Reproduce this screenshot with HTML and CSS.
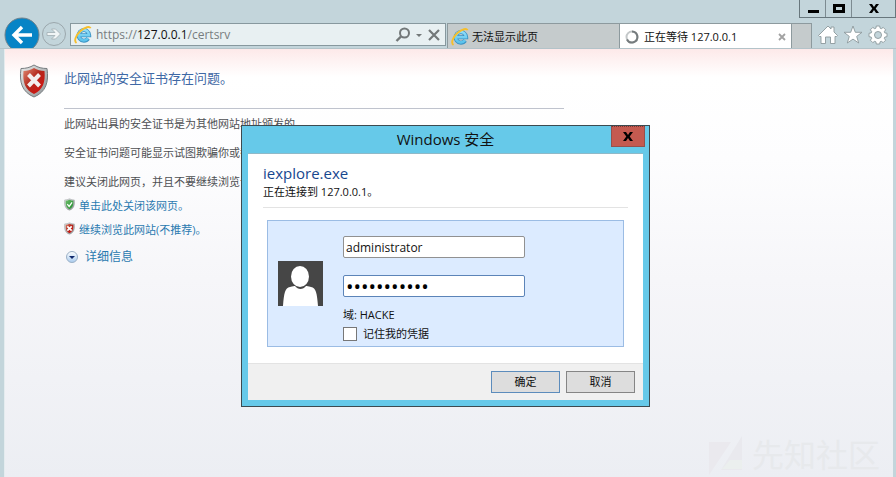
FILE: index.html
```html
<!DOCTYPE html>
<html lang="zh-CN">
<head>
<meta charset="utf-8">
<title>正在等待 127.0.0.1</title>
<link rel="stylesheet" href="styles.css">
</head>
<body>
<svg class="defs" aria-hidden="true">
  <defs>
    <linearGradient id="ie-blue" x1="0" y1="0" x2="0" y2="1"><stop offset="0" stop-color="#8fdcf8"/><stop offset="1" stop-color="#5bc3ec"/></linearGradient>
    <linearGradient id="steel" x1="0" y1="0" x2="1" y2="1"><stop offset="0" stop-color="#e8eaea"/><stop offset="1" stop-color="#8c9294"/></linearGradient>
    <linearGradient id="red" x1="0" y1="0" x2="1" y2="1"><stop offset="0" stop-color="#e08a72"/><stop offset=".45" stop-color="#b3281d"/><stop offset="1" stop-color="#d90d0d"/></linearGradient>
    <linearGradient id="green" x1="0" y1="0" x2="1" y2="1"><stop offset="0" stop-color="#6fbf6c"/><stop offset="1" stop-color="#1e8a2b"/></linearGradient>
    <linearGradient id="orb" x1="0" y1="0" x2="0" y2="1"><stop offset="0" stop-color="#fff"/><stop offset="1" stop-color="#a9cbee"/></linearGradient>
    <symbol id="ie" viewBox="0 0 18 18">
      <path d="M14.200 12.500a5.300 5.300 0 1 1 1-3.200H5.500" fill="none" stroke="#3b93c4" stroke-width="4"/>
      <path d="M14 12.300a5.200 5.200 0 1 1 1-3H5.500" fill="none" stroke="url(#ie-blue)" stroke-width="2.600"/>
      <path d="M2.500 17C-.5 15 2 9 6.500 5S16 0 16.500 2.200" fill="none" stroke="#f6bf2c" stroke-width="1.900"/>
    </symbol>
    <symbol id="shield" viewBox="0 0 30 34">
      <path d="M15 1c4 2.500 8 3.500 13 3.500C30 18 27 28 15 33 3 28 0 18 2 4.500 7 4.500 11 3.500 15 1z" fill="url(#steel)" stroke="#777d80"/>
    </symbol>
  </defs>
</svg>

<header class="chrome">
  <div class="window-controls">
    <button type="button" aria-label="最小化"><svg width="12" height="10" viewBox="0 0 12 10"><path d="M1 7.500h11" stroke="#000" stroke-width="3"/></svg></button>
    <button type="button" aria-label="最大化"><svg width="12" height="10" viewBox="0 0 12 10"><path d="M1.500 1.500h9v6h-9z" fill="none" stroke="#000" stroke-width="3"/></svg></button>
    <button type="button" class="wide" aria-label="关闭"><svg width="10" height="10" viewBox="0 0 10 10"><path d="M0 0h3L5 3 7 0h3L6.700 4.500 10 9H7L5 6 3 9H0l3.300-4.500z"/></svg></button>
  </div>
  <nav class="toolbar">
    <button type="button" class="back" aria-label="后退"><svg width="36" height="36" viewBox="0 0 36 36"><circle cx="18" cy="18" r="17" fill="#0784c6" stroke="#70828c"/><path d="M28 18H11M18 10l-8 8 8 8" fill="none" stroke="#fff" stroke-width="3.400"/></svg></button>
    <button type="button" class="forward" aria-label="前进"><svg width="26" height="26" viewBox="0 0 26 26"><circle cx="13" cy="13" r="11.500" fill="none" stroke="#9ba7ac"/><path d="M6 11.500h8L10.500 8h4l5 5-5 5h-4l3.500-3.500H6z" fill="#f0f5f6" stroke="#a1adb2" stroke-width=".8"/></svg></button>
    <div class="address">
      <svg width="18" height="18"><use href="#ie"/></svg>
      <a href="#" class="url">https://<b>127.0.0.1</b>/certsrv</a>
      <button type="button" aria-label="搜索"><svg width="16" height="16" viewBox="0 0 16 16"><circle cx="9.500" cy="6" r="4.500" fill="none" stroke="#737879" stroke-width="2"/><path d="M6 9.500L1.500 14" stroke="#737879" stroke-width="2.400"/></svg></button>
      <button type="button" aria-label="下拉"><svg width="12" height="16" viewBox="0 0 12 16"><path d="M3 7h6L6 10z" fill="#737879"/></svg></button>
      <button type="button" aria-label="停止"><svg width="14" height="16" viewBox="0 0 14 16"><path d="M2 3l10 10M12 3L2 13" stroke="#737879" stroke-width="2.200"/></svg></button>
    </div>
    <a href="#" class="tab"><svg width="18" height="18"><use href="#ie"/></svg><span>无法显示此页</span></a>
    <div class="tab active">
      <svg width="18" height="18" viewBox="0 0 18 18"><circle cx="9" cy="9" r="5.500" fill="none" stroke="#c4c8c9" stroke-width="2"/><path d="M9 3.500A5.500 5.500 0 1 1 4 11.500" fill="none" stroke="#757b7d" stroke-width="2"/></svg>
      <span>正在等待 127.0.0.1</span>
      <button type="button" aria-label="关闭选项卡"><svg width="8" height="8" viewBox="0 0 8 8"><path d="M1 1l6 6M7 1L1 7" stroke="#a2a2a2" stroke-width="1.800"/></svg></button>
    </div>
    <button type="button" class="new-tab" aria-label="新建选项卡"></button>
    <div class="tools">
      <button type="button" aria-label="主页"><svg width="20" height="20" viewBox="0 0 20 20"><path d="M10 1l3 3V2h3v5l3.500 3.500-1 1H17V18.500h-4.500V12h-5v6.500H3v-7H1.500l-1-1z" fill="#fff" stroke="#8c989c" stroke-width=".9"/></svg></button>
      <button type="button" aria-label="收藏夹"><svg width="20" height="20" viewBox="0 0 20 20"><path d="M10 1l2.300 6.300h6.700l-5.300 4.100 2 6.600L10 14.100 4.300 18l2-6.600L1 7.300h6.700z" fill="#fff" stroke="#8c989c" stroke-width=".9"/></svg></button>
      <button type="button" aria-label="工具"><svg width="20" height="20" viewBox="0 0 20 20"><g fill="#fff" stroke="#8c989c" stroke-width=".9"><path d="M8.300 1h3.400l.4 2.200 1.200.5 1.900-1.300 2.400 2.400-1.300 1.900.5 1.200 2.200.4v3.400l-2.200.4-.5 1.200 1.300 1.900-2.400 2.400-1.900-1.300-1.200.5-.4 2.200H8.300l-.4-2.200-1.200-.5-1.900 1.300-2.400-2.400 1.300-1.900-.5-1.200L1 11.700V8.300l2.200-.4.5-1.200-1.300-1.900 2.400-2.400 1.900 1.300 1.200-.5z"/><circle cx="10" cy="10" r="3.500" fill="#c3d5db"/></g></svg></button>
    </div>
  </nav>
</header>

<main class="page">
  <svg class="big-shield" width="30" height="34" viewBox="0 0 30 34"><use href="#shield"/><path d="M15 4c3 2 7 3 10.500 3C26.500 18 24 26 15 30 6 26 3.500 18 4.500 7 8 7 12 6 15 4z" fill="url(#red)"/><path d="M9.500 10.500l11 11.500M20.500 10.500L9.500 22" stroke="#f3eeee" stroke-width="4"/></svg>
  <div class="article">
    <h1>此网站的安全证书存在问题。</h1>
    <p>此网站出具的安全证书是为其他网站地址颁发的</p>
    <p>安全证书问题可能显示试图欺骗你或截</p>
    <p>建议关闭此网页，并且不要继续浏览该</p>
    <a href="#" class="choice"><svg width="11" height="13" viewBox="0 0 30 34"><use href="#shield"/><path d="M15 4c3 2 7 3 10.500 3C26 18 24 26 15 30 6 26 4 18 4.500 7 8 7 12 6 15 4z" fill="url(#green)"/><path d="M9 16l5 6 8-11" fill="none" stroke="#fff" stroke-width="3.500"/></svg>单击此处关闭该网页。</a>
    <a href="#" class="choice"><svg width="11" height="13" viewBox="0 0 30 34"><use href="#shield"/><path d="M15 4c3 2 7 3 10.500 3C26 18 24 26 15 30 6 26 4 18 4.500 7 8 7 12 6 15 4z" fill="url(#red)"/><path d="M9 11l12 12M21 11L9 23" stroke="#fff" stroke-width="4.500"/></svg>继续浏览此网站(不推荐)。</a>
    <a href="#" class="more"><svg width="12" height="12" viewBox="0 0 12 12"><circle cx="6" cy="6" r="5.500" fill="url(#orb)" stroke="#9bb0c6"/><path d="M3 5h6L6 8z" fill="#10286c"/></svg>详细信息</a>
  </div>
  <div class="watermark"><svg width="36" height="40" viewBox="0 0 36 40"><path d="M1 7h22L1 40z" fill="#eae9ee"/><path d="M34 1v34H13z" fill="#e9e9ee"/><path d="M14 34l8-9h12v9z" fill="#ebefee"/></svg><span>先知社区</span></div>
</main>

<form class="dialog" role="dialog" aria-labelledby="dialog-title">
  <div class="titlebar">
    <h2 id="dialog-title">Windows 安全</h2>
    <button type="button" class="close" aria-label="关闭"><svg width="10" height="9" viewBox="0 0 10 9"><path d="M0 0h3L5 3 7 0h3L6.700 4.500 10 9H7L5 6 3 9H0l3.300-4.500z"/></svg></button>
  </div>
  <div class="sheet">
    <div class="prompt">
      <h3>iexplore.exe</h3>
      <p>正在连接到 127.0.0.1。</p>
    </div>
    <div class="credentials">
      <svg width="45" height="45" viewBox="0 0 45 45"><path d="M0 0h45v45H0z" fill="#464646"/><path d="M5 45C6 32 7 27 12 26c3-1 4-1 5-1 3 4 8 4 11 0 1 0 2 0 5 1 5 1 6 6 7 19z" fill="#fff"/><ellipse cx="22" cy="15.500" rx="9" ry="10.500" fill="#fff"/></svg>
      <div class="fields">
        <input type="text" value="administrator" aria-label="用户名">
        <input type="password" class="focused" value="abcdefghijk" aria-label="密码">
        <span class="domain">域: HACKE</span>
        <label class="remember"><input type="checkbox">记住我的凭据</label>
      </div>
    </div>
    <div class="actions">
      <button type="button" class="default">确定</button>
      <button type="button">取消</button>
    </div>
  </div>
</form>
</body>
</html>
```
FILE: styles.css
```css
* { box-sizing: border-box; }

body {
  margin: 0;
  min-height: 100vh;
  display: flex;
  flex-direction: column;
  position: relative;
  overflow: hidden;
  background: #c3d5db;
  color: #111;
  font: 11px/16px "Open Sans", "Noto Sans CJK SC", sans-serif;
}

h1, h2, h3, p { margin: 0; font-weight: 400; }
a { color: inherit; text-decoration: none; }
svg { display: block; flex: none; }
button { padding: 0; border: 0; background: none; font: inherit; color: inherit; }
.defs { position: absolute; width: 0; height: 0; }

/* Browser chrome */
.chrome { height: 49px; overflow: hidden; padding-top: 23px; border-bottom: 1px solid #b3c3c9; }

.window-controls {
  position: absolute;
  top: 0;
  right: 0;
  display: flex;
  height: 18px;
  border: 1px solid #68777d;
  border-top: 0;
}
.window-controls button {
  width: 26px;
  display: flex;
  align-items: center;
  justify-content: center;
  border-right: 1px solid #7d8b91;
}
.window-controls .wide { width: 43px; border-right: 0; }

.toolbar { display: flex; align-items: flex-start; padding: 0 3px 0 4px; height: 26px; }
.back, .forward { flex: none; }
.back { margin: -6px 0 0; }
.forward { margin: -2px 3px 0 1px; }

.address {
  flex: 1;
  min-width: 0;
  height: 23px;
  display: flex;
  align-items: center;
  gap: 4px;
  padding: 0 4px 0 3px;
  border: 1px solid #87989e;
  background: #e8f0f2;
}
.address button + button { margin-left: -2px; }
.url { flex: 1; color: #777d80; font-size: 12px; }
.url b { color: #111; font-weight: 400; }

.tab {
  width: 172px;
  height: 26px;
  display: flex;
  align-items: center;
  gap: 3px;
  margin-left: 1px;
  padding: 0 5px 0 3px;
  border: 1px solid #8d9a9e;
  border-bottom: 0;
  border-right: 0;
  background: #c5cbcc;
}
.tab span { flex: 1; }
.tab.active { margin-left: 0; background: #fff; }
.new-tab { width: 21px; height: 26px; border: 1px solid #8d9a9e; border-bottom: 0; background: #c5cbcc; }
.tools { display: flex; gap: 5px; padding: 2px 5px 0 6px; }

/* Certificate warning */
.page {
  flex: 1;
  display: flex;
  align-items: flex-start;
  gap: 15px;
  margin: 0 3px 0 4px;
  padding: 15px 14px;
  border-left: 1px solid #e4ecef;
  background: linear-gradient(#fde9e9 0, #fff 28px, #fdfdfe 110px, #f6f6f9 230px, #eceef3 100%);
}
.article { display: flex; flex-direction: column; align-items: flex-start; width: 500px; color: #4d4f52; }
.article h1 {
  width: 100%;
  height: 45px;
  margin-bottom: 7px;
  padding-top: 4px;
  border-bottom: 1px solid #bfc3cd;
  color: #3f68a5;
  font-size: 13px;
  line-height: 20px;
}
.article p { margin-bottom: 13px; white-space: nowrap; }
.article p + p + p { margin-bottom: 8px; }
.choice { display: flex; gap: 4px; margin-bottom: 8px; color: #2a7ab0; }
.more { display: flex; align-items: center; gap: 7px; padding: 3px 2px; color: #2a7ab0; font-size: 12px; }

.watermark {
  position: absolute;
  right: 16px;
  bottom: 2px;
  display: flex;
  align-items: center;
  gap: 8px;
  color: #e7e9ec;
  font-size: 32px;
  line-height: 40px;
}

/* Credential dialog */
.dialog {
  position: absolute;
  top: 125px;
  left: 241px;
  width: 409px;
  padding: 0 6px 6px;
  border: 1px solid #3c4a50;
  background: #66c9e9;
}
.titlebar { height: 27px; text-align: center; }
.titlebar h2 { font-size: 15px; line-height: 27px; }
.close {
  position: absolute;
  top: 0;
  right: 4px;
  width: 34px;
  height: 21px;
  display: flex;
  align-items: center;
  justify-content: center;
  border: 1px solid #96504c;
  border-top: 1px dotted #7c3531;
  background: #c45a50;
}
.sheet { border-top: 1px solid #8fb9c8; background: #fff; }
.prompt { margin: 0 15px 12px; padding-top: 9px; border-bottom: 1px solid #e3e3e3; }
.prompt h3 { color: #17478f; font-size: 15px; line-height: 21px; }
.prompt p { padding-bottom: 7px; line-height: 16px; }
.credentials {
  display: flex;
  align-items: center;
  gap: 20px;
  margin: 0 19px 16px;
  padding: 15px 10px 2px;
  border: 1px solid #9bbce4;
  background: #dcebff;
}
.credentials > svg { margin-bottom: 13px; }
.fields { display: flex; flex-direction: column; align-items: flex-start; }
.fields input { margin: 0; font: inherit; color: #111; }
.fields input[type="text"], .fields input[type="password"] {
  width: 182px;
  height: 22px;
  margin-bottom: 17px;
  padding: 0 2px;
  border: 1px solid #919191;
  border-radius: 2px;
  background: #fff;
  font-size: 12px;
}
.fields input[type="password"].focused { margin-bottom: 9px; border-color: #5c84b8; font-size: 20px; line-height: 20px; color: #000; }
.domain { line-height: 18px; }
.remember { display: flex; align-items: center; gap: 6px; line-height: 20px; }
.remember input { appearance: none; width: 14px; height: 14px; border: 1px solid #777; background: #fff; }
.actions {
  display: flex;
  justify-content: flex-end;
  gap: 6px;
  padding: 7px 8px;
  border-top: 1px solid #e3e3e3;
  background: #f0f0f0;
}
.actions button { width: 69px; height: 22px; border: 1px solid #858585; background: #ddd; }
.actions .default { border-color: #5c8cbc; }
```
